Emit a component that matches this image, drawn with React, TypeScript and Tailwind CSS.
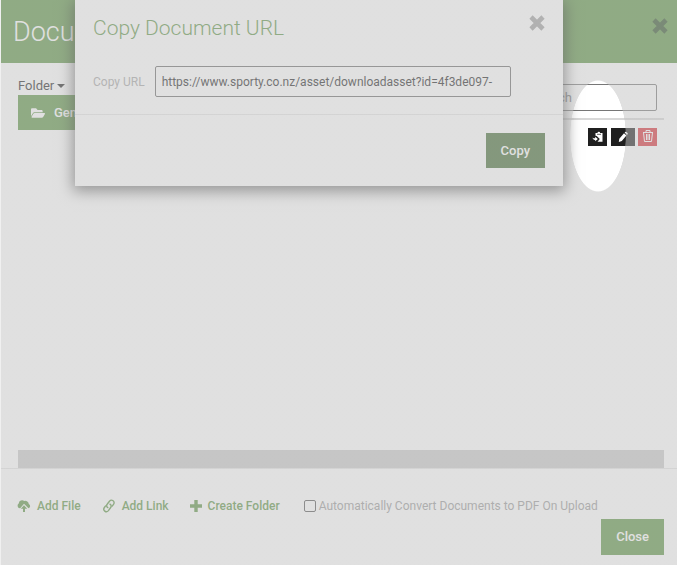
import React from "react";
import { FaFolderOpen } from "react-icons/fa";

function CrossIcon({ className }: { className: string }) {
  return (
    <svg viewBox="0 0 16 16" className={className} fill="none" stroke="currentColor" strokeWidth="4.6" aria-hidden="true">
      <path d="M2 2l12 12M14 2L2 14" />
    </svg>
  );
}

function PasteIcon() {
  return (
    <svg viewBox="0 0 12 12" className="size-3" fill="currentColor" aria-hidden="true">
      <path d="M3.500 2h2a1.300 1.300 0 0 1 2.600 0H10.500V10.800H5.500L7.800 8 4.700 5 3.500 4.800Z" />
      <path d="M.5 6.500C1 7.300 2 7.500 3.200 7.300V5.800L5.800 8 3.200 10.300V8.900C1.800 9 .7 8.200.5 6.500Z" />
      <path d="M5 3.300h4" stroke="#1f1f1f" strokeWidth="0.7" />
    </svg>
  );
}

function PencilIcon() {
  return (
    <svg viewBox="0 0 12 12" className="size-3" fill="currentColor" aria-hidden="true">
      <path d="M7.600 1.600 8.300 1q.6-.3 1.100.1l1.200 1q.4.5 0 1.100l-.6.700ZM7 2.300 9.400 4.600 4.800 10 1.800 11 2.300 7.800Z" />
    </svg>
  );
}

function TrashIcon() {
  return (
    <svg viewBox="0 0 12 14" className="mb-0.5 h-[14px] w-3" fill="none" stroke="currentColor" aria-hidden="true">
      <path d="M1 3.500h10M4 3.300V1.500h4v1.800M1.500 3.500l1 9h7l1-9M4.500 5v6M6 5v6M7.500 5v6" />
    </svg>
  );
}

function CloudUploadIcon() {
  return (
    <svg viewBox="0 0 14 14" className="size-[14px]" fill="currentColor" aria-hidden="true">
      <path d="M3.200 9.300A2.700 2.700 0 0 1 1.700 4.400 3.500 3.500 0 0 1 7.300 2a3.500 3.500 0 0 1 4.500 3 2.300 2.300 0 0 1-.3 4.300L7 4.800Z" />
      <path d="M7 6.300 10.200 9.700H8V13H6V9.700H3.800Z" />
    </svg>
  );
}

function LinkIcon() {
  return (
    <svg viewBox="0 0 14 14" className="size-[14px]" fill="none" stroke="currentColor" strokeWidth="1.400" strokeLinecap="round" aria-hidden="true">
      <path d="M5.800 8.600C4.300 7.600 4.300 6.200 5.300 5L7.500 2.200C8.500 1 9.900.9 11.100 1.800s1.300 2.400.4 3.600L10.200 7.100" />
      <path d="M8 5.200c1.500 1 1.500 2.400.5 3.600l-2.100 2.800c-1 1.200-2.500 1.400-3.600.5s-1.300-2.400-.4-3.600l1.200-1.600" />
    </svg>
  );
}

function PlusIcon() {
  return (
    <svg viewBox="0 0 12 12" className="size-3" fill="none" stroke="currentColor" strokeWidth="3.400" aria-hidden="true">
      <path d="M6 0v12M0 6h12" />
    </svg>
  );
}

function FooterAction({ icon, children }: { icon: React.ReactNode; children: string }) {
  return (
    <button type="button" className="flex items-center gap-[6px] font-medium text-[#5c9344]">
      {icon}
      <span>{children}</span>
    </button>
  );
}

function CopyDialog() {
  return (
    <section
      role="dialog"
      aria-labelledby="copy-title"
      className="absolute top-0 right-[114px] left-[74px] z-10 bg-white shadow-[0_3px_14px_2px_rgba(0,0,0,0.6)]"
    >
      <div className="flex items-start justify-between px-[18px] pt-3">
        <h2 id="copy-title" className="text-[21px] leading-8 font-light text-[#5c9344]">Copy Document URL</h2>
        <button type="button" aria-label="Close dialog" className="pt-[3px] text-[#a0a0a0]">
          <CrossIcon className="size-4" />
        </button>
      </div>
      <div className="mt-[22px] flex items-center gap-[10px] pr-[52px] pb-[17px] pl-[18px]">
        <label htmlFor="copy-url" className="shrink-0 text-[#a5a5a5]">Copy URL</label>
        <input
          id="copy-url"
          readOnly
          value="https://www.sporty.co.nz/asset/downloadasset?id=4f3de097-"
          className="h-[31px] min-w-0 flex-1 rounded-xs border border-[#6a6a6a] px-[6px] text-[#222]"
        />
      </div>
      <div className="flex justify-end border-t border-[#e5e5e5] p-[18px]">
        <button type="button" className="h-[35px] bg-[#446c35] px-[15px] text-[13px] font-medium text-white">Copy</button>
      </div>
    </section>
  );
}

export default function App() {
  return (
    <div className="relative flex min-h-screen flex-col overflow-hidden border-l border-[#f0f0f0] bg-white font-[Roboto,sans-serif] text-[12px] leading-5">
      <header className="flex h-[63px] items-center justify-between bg-[#5c9344] pr-[9px] pl-3">
        <h1 className="text-[27px] leading-9 font-light text-white">Documents</h1>
        <button type="button" aria-label="Close documents" className="mb-3 text-[#30512a]">
          <CrossIcon className="size-4" />
        </button>
      </header>

      <main className="flex flex-1 flex-col pr-[13px] pl-[17px]">
        <div className="flex flex-1 items-start">
          <nav className="w-[180px] pt-[13px]">
            <button type="button" className="flex h-[19px] items-center gap-[3px] text-[13px] text-[#222]">
              Folder
              <svg viewBox="0 0 8 4" className="h-1 w-2" fill="currentColor" aria-hidden="true"><path d="M0 0h8L4 4z" /></svg>
            </button>
            <button type="button" className="flex h-[35px] w-full items-center gap-[9px] bg-[#5c9344] pl-[13px] text-[13px] font-medium text-white">
              <FaFolderOpen className="size-[14px]" />
              General
            </button>
          </nav>
          <div className="flex-1 pt-[21px]">
            <div className="flex justify-end border-b-2 border-[#d8d8d8] pr-[7px] pb-[7px]">
              <input aria-label="Search" placeholder="Search" className="h-[27px] w-[136px] rounded-xs border border-[#777] px-[10px] text-[13px] placeholder:text-[#777]" />
            </div>
            <div className="flex justify-end gap-[3px] pt-2 pr-[7px] text-white">
              <button type="button" aria-label="Copy URL of document" className="mr-px flex h-[18px] w-[19px] items-center justify-center bg-[#1f1f1f]"><PasteIcon /></button>
              <button type="button" aria-label="Edit document" className="flex h-[18px] w-6 items-center justify-center bg-[#1f1f1f]"><PencilIcon /></button>
              <button type="button" aria-label="Delete document" className="flex h-[18px] w-[19px] items-center justify-center bg-[#d83139]"><TrashIcon /></button>
            </div>
          </div>
        </div>
        <div className="h-[18px] bg-[#cacaca]" />
      </main>

      <footer className="border-t border-[#e5e5e5] pt-[27px] pr-[13px] pb-[10px] pl-4">
        <div className="flex items-center gap-6">
          <div className="flex items-center gap-[21px]">
            <FooterAction icon={<CloudUploadIcon />}>Add File</FooterAction>
            <FooterAction icon={<LinkIcon />}>Add Link</FooterAction>
            <FooterAction icon={<PlusIcon />}>Create Folder</FooterAction>
          </div>
          <label className="flex items-center gap-[3px] text-[#999]">
            <input type="checkbox" className="size-3 appearance-none rounded-xs border border-[#555] bg-white checked:bg-[#5c9344]" />
            Automatically Convert Documents to PDF On Upload
          </label>
        </div>
        <div className="flex justify-end pt-[3px]">
          <button type="button" className="h-9 bg-[#5c9344] px-[15px] text-[13px] font-medium text-white">Close</button>
        </div>
      </footer>

      <CopyDialog />

      <div
        aria-hidden="true"
        className="pointer-events-none absolute inset-0 z-20 bg-[radial-gradient(ellipse_28px_56px_at_597px_136px,transparent_98%,rgba(194,194,194,0.51)_100%)]"
      />
    </div>
  );
}
